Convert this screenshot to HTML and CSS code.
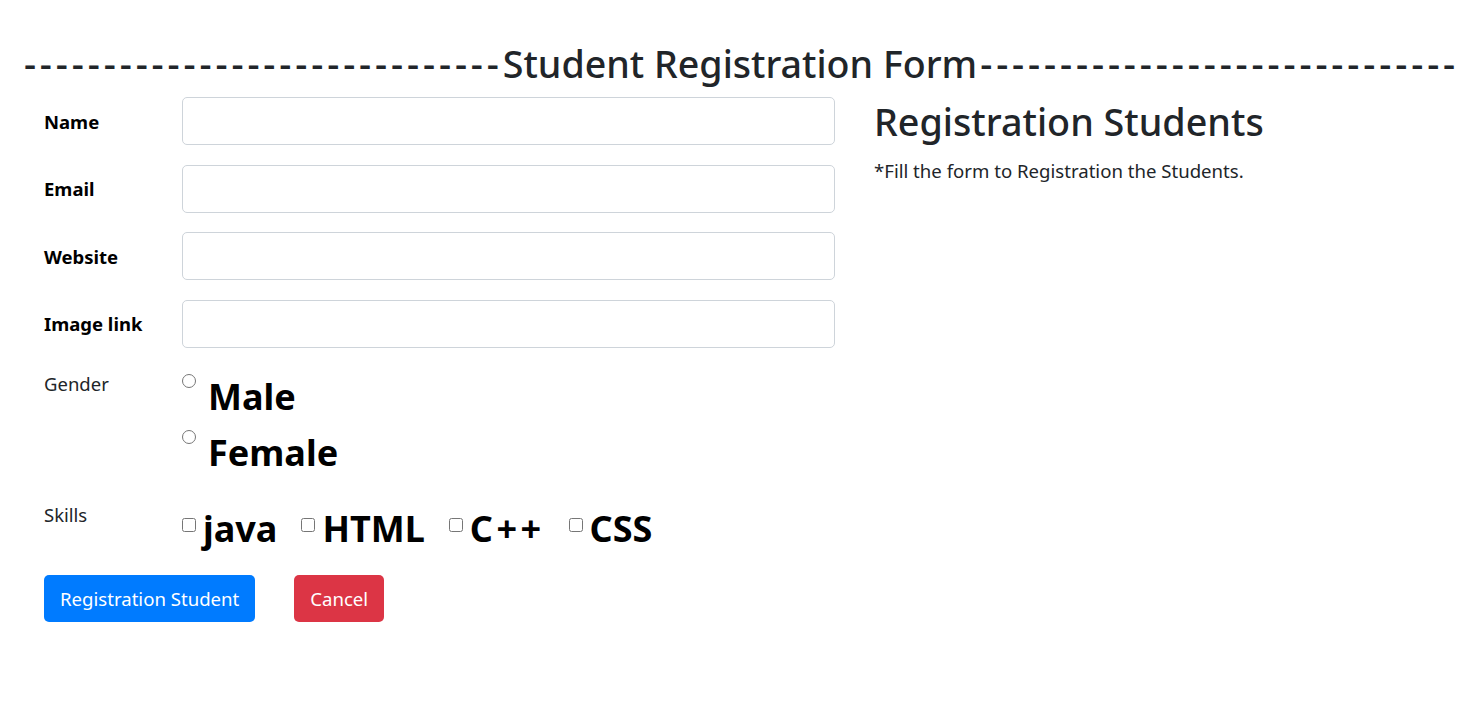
FILE: index.html
```html
<!DOCTYPE html>
<html lang="en">
<head>
<meta charset="utf-8">
<title>Student Registration Form</title>
<link rel="stylesheet" href="styles.css">
</head>
<body>
<h1 class="page-title"><span class="dashes">------------------------------</span>Student Registration Form<span class="dashes dashes-right">------------------------------</span></h1>
<div class="main">
  <form class="reg-form">
    <div class="form-row">
      <label class="field-label strong" for="name">Name</label>
      <input class="form-control" id="name" type="text">
    </div>
    <div class="form-row">
      <label class="field-label strong" for="email">Email</label>
      <input class="form-control" id="email" type="email">
    </div>
    <div class="form-row">
      <label class="field-label strong" for="website">Website</label>
      <input class="form-control" id="website" type="text">
    </div>
    <div class="form-row">
      <label class="field-label strong" for="image">Image link</label>
      <input class="form-control" id="image" type="text">
    </div>
    <div class="choice-row gender-row">
      <span class="field-label plain">Gender</span>
      <div class="radio-list">
        <div class="radio-item"><input type="radio" name="gender" id="male"><label class="big-label" for="male">Male</label></div>
        <div class="radio-item"><input type="radio" name="gender" id="female"><label class="big-label" for="female">Female</label></div>
      </div>
    </div>
    <div class="choice-row skills-row">
      <span class="field-label plain">Skills</span>
      <div class="check-list">
        <div class="check-item"><input type="checkbox" id="java"><label class="big-label" for="java">java</label></div>
        <div class="check-item"><input type="checkbox" id="html"><label class="big-label" for="html">HTML</label></div>
        <div class="check-item"><input type="checkbox" id="cpp"><label class="big-label spaced" for="cpp">C++</label></div>
        <div class="check-item"><input type="checkbox" id="css"><label class="big-label" for="css">CSS</label></div>
      </div>
    </div>
    <div class="actions">
      <button type="submit" class="btn btn-primary">Registration Student</button>
      <button type="button" class="btn btn-danger">Cancel</button>
    </div>
  </form>
  <aside class="info">
    <h2 class="info-title">Registration Students</h2>
    <p class="info-text">*Fill the form to Registration the Students.</p>
  </aside>
</div>
</body>
</html>
```

FILE: styles.css
```css
* { box-sizing: border-box; }
body {
  margin: 0;
  font-family: "Noto Sans", "Open Sans", sans-serif;
  color: #212529;
  background: #fff;
}
.page-title {
  margin: 40px 0 0;
  text-align: center;
  font-size: 37.6px;
  font-weight: 500;
  line-height: 48px;
  white-space: nowrap;
}
.dashes { letter-spacing: 3.9px; }
.dashes-right { margin-left: 3px; }
.main {
  display: flex;
  padding-left: 44px;
  margin-top: 9px;
}
.reg-form {
  width: 791px;
  flex: none;
}
.form-row {
  display: grid;
  grid-template-columns: 138px 1fr;
  align-items: center;
  margin-bottom: 19.5px;
}
.field-label {
  font-size: 18.5px;
  color: #000;
}
.field-label.strong { font-weight: 700; }
.field-label.plain { color: #212529; font-weight: 400; }
.form-control {
  height: 48px;
  width: 100%;
  border: 1px solid #ced4da;
  border-radius: 5px;
  font: inherit;
  font-size: 20px;
  padding: 8px 16px;
}
.choice-row {
  display: grid;
  grid-template-columns: 138px 1fr;
  align-items: start;
}
.gender-row { padding-top: 4px; }
.radio-list { display: flex; flex-direction: column; }
.radio-item, .check-item {
  display: flex;
  align-items: flex-start;
}
.radio-item { height: 56px; }
.radio-item input {
  width: 14px; height: 14px;
  margin: 3px 12px 0 0;
}
.big-label {
  font-size: 36px;
  font-weight: 700;
  color: #000;
  line-height: 1.2;
  margin-top: 4px;
}
.big-label.spaced { letter-spacing: 3.5px; }
.skills-row { margin-top: 19px; }
.check-list { display: flex; }
.check-item input {
  width: 14px; height: 14px;
  margin: 16px 7px 0 0;
}
.check-item .big-label { margin-top: 5px; }
.check-item { margin-right: 24px; }
.actions {
  display: flex;
  gap: 39px;
  margin-top: 25px;
}
.btn {
  height: 47px;
  border: none;
  border-radius: 5px;
  font: inherit;
  font-size: 18.6px;
  color: #fff;
  padding: 0 16px;
}
.btn-primary { background: #007bff; }
.btn-danger { background: #dc3545; }
.info { margin-left: 39px; }
.info-title {
  margin: 0;
  font-size: 37.7px;
  font-weight: 500;
  line-height: 1.2;
  padding-top: 2px;
}
.info-text {
  margin: 14px 0 0;
  font-size: 18.6px;
}
```
